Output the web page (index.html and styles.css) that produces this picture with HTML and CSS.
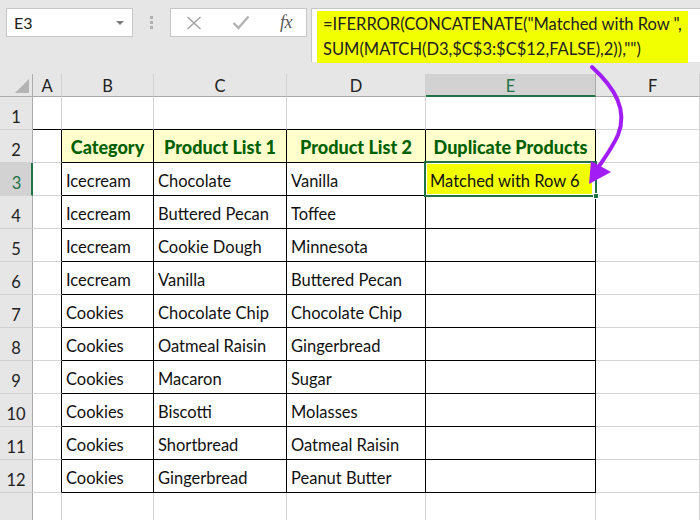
FILE: index.html
```html
<!DOCTYPE html>
<html>
<head>
<meta charset="utf-8">
<link rel="stylesheet" href="styles.css">
</head>
<body>
<div class="app">
  <div class="topbar">
    <div class="namebox"><span class="ref">E3</span><span class="caret"></span></div>
    <div class="grip"><i></i><i></i><i></i></div>
    <div class="fnbox">
      <svg class="ico" width="16" height="14" viewBox="0 0 16 14"><path d="M1.5 1 L14.5 13 M14.5 1 L1.5 13" stroke="#a6a6a6" stroke-width="1.6" fill="none"/></svg>
      <svg class="ico" width="18" height="15" viewBox="0 0 18 15"><path d="M1.5 8 L6.5 13 L16.5 1.5" stroke="#b3b3b3" stroke-width="2.4" fill="none"/></svg>
      <span class="fx">fx</span>
    </div>
    <div class="formulabox">
      <div class="formula">=IFERROR(CONCATENATE("Matched with Row ",<br>SUM(MATCH(D3,$C$3:$C$12,FALSE),2)),"")</div>
    </div>
  </div>
  <div class="sheet">
    <div class="corner"><span class="tri"></span></div>
    <div class="ch">A</div><div class="ch">B</div><div class="ch">C</div><div class="ch">D</div><div class="ch sel">E</div><div class="ch last">F</div>

    <div class="rh">1</div><div class="c tb"></div><div class="c tb"></div><div class="c tb"></div><div class="c tb"></div><div class="c tb"></div><div class="c"></div>

    <div class="rh">2</div><div class="c tl"></div><div class="c t hd">Category</div><div class="c t hd">Product List 1</div><div class="c t hd">Product List 2</div><div class="c t hd">Duplicate Products</div><div class="c"></div>

    <div class="rh sel">3</div><div class="c tl"></div><div class="c t">Icecream</div><div class="c t">Chocolate</div><div class="c t">Vanilla</div><div class="c t active"><div class="selbox"><div class="hl">Matched with Row 6</div></div><span class="handle"></span></div><div class="c"></div>

    <div class="rh">4</div><div class="c tl"></div><div class="c t">Icecream</div><div class="c t">Buttered Pecan</div><div class="c t">Toffee</div><div class="c t"></div><div class="c"></div>

    <div class="rh">5</div><div class="c tl"></div><div class="c t">Icecream</div><div class="c t">Cookie Dough</div><div class="c t">Minnesota</div><div class="c t"></div><div class="c"></div>

    <div class="rh">6</div><div class="c tl"></div><div class="c t">Icecream</div><div class="c t">Vanilla</div><div class="c t">Buttered Pecan</div><div class="c t"></div><div class="c"></div>

    <div class="rh">7</div><div class="c tl"></div><div class="c t">Cookies</div><div class="c t">Chocolate Chip</div><div class="c t">Chocolate Chip</div><div class="c t"></div><div class="c"></div>

    <div class="rh">8</div><div class="c tl"></div><div class="c t">Cookies</div><div class="c t">Oatmeal Raisin</div><div class="c t">Gingerbread</div><div class="c t"></div><div class="c"></div>

    <div class="rh">9</div><div class="c tl"></div><div class="c t">Cookies</div><div class="c t">Macaron</div><div class="c t">Sugar</div><div class="c t"></div><div class="c"></div>

    <div class="rh">10</div><div class="c tl"></div><div class="c t">Cookies</div><div class="c t">Biscotti</div><div class="c t">Molasses</div><div class="c t"></div><div class="c"></div>

    <div class="rh">11</div><div class="c tl"></div><div class="c t">Cookies</div><div class="c t">Shortbread</div><div class="c t">Oatmeal Raisin</div><div class="c t"></div><div class="c"></div>

    <div class="rh">12</div><div class="c tl"></div><div class="c t">Cookies</div><div class="c t">Gingerbread</div><div class="c t">Peanut Butter</div><div class="c t"></div><div class="c"></div>

    <div class="rh"></div><div class="c"></div><div class="c"></div><div class="c"></div><div class="c"></div><div class="c"></div><div class="c"></div>
  </div>
  <svg class="arrow" width="700" height="520" viewBox="0 0 700 520">
    <path d="M592 67 C 615 88, 628 110, 618 135 C 611 150, 603 160, 598 168" stroke="#a21cf5" stroke-width="4" fill="none" stroke-linecap="round"/>
    <path d="M589 184 L591 161 L611 172 Z" fill="#a21cf5"/>
  </svg>
</div>
</body>
</html>
```
FILE: styles.css
```css
* { box-sizing: border-box; }
html, body { margin: 0; padding: 0; }
body {
  width: 700px;
  height: 520px;
  overflow: hidden;
  background: #fff;
  font-family: Lato, "Open Sans", sans-serif;
  color: #000;
}
.app { position: relative; width: 700px; height: 520px; overflow: hidden; }

.topbar {
  height: 74px;
  background: #e6e6e6;
  display: flex;
  align-items: flex-start;
  padding: 8px 0 0 6px;
}
.namebox {
  width: 127px;
  height: 29px;
  background: #fff;
  border: 1px solid #c6c6c6;
  display: flex;
  align-items: center;
  justify-content: space-between;
  padding: 0 8px 0 7px;
}
.ref { font-size: 16px; color: #222; }
.caret {
  width: 0; height: 0;
  border-left: 4px solid transparent;
  border-right: 4px solid transparent;
  border-top: 4px solid #7a7a7a;
}
.grip {
  width: 37px;
  height: 29px;
  display: flex;
  flex-direction: column;
  align-items: center;
  justify-content: center;
  gap: 2px;
}
.grip i { display: block; width: 3px; height: 3px; background: #b0b0b0; }
.fnbox {
  width: 137px;
  height: 29px;
  background: #fff;
  border: 1px solid #c6c6c6;
  display: flex;
  align-items: center;
  padding: 0 14px 0 15px;
  justify-content: space-between;
}
.fx {
  font-family: "Liberation Serif", serif;
  font-style: italic;
  font-size: 18px;
  color: #5a5a5a;
  letter-spacing: -0.5px;
}
.formulabox {
  flex: 1;
  margin-left: 4px;
  height: 54px;
  background: #fff;
  border: 1px solid #c6c6c6;
  border-right: none;
  border-bottom: none;
  padding: 2px 12px 0 5px;
}
.formula {
  background: #f2ff00;
  height: 52px;
  padding: 1px 0 0 6px;
  font-size: 16.5px;
  line-height: 25px;
  color: #222;
  white-space: nowrap;
}

.sheet {
  display: grid;
  grid-template-columns: 33px 29px 92px 133px 139px 170px 1fr;
  grid-template-rows: 23px repeat(13, 33px);
}
.corner {
  background: #e6e6e6;
  border-right: 1px solid #ababab;
  border-bottom: 1px solid #ababab;
  position: relative;
}
.tri {
  position: absolute;
  right: 3px; bottom: 3px;
  width: 0; height: 0;
  border-left: 14px solid transparent;
  border-bottom: 14px solid #b4b4b4;
}
.ch {
  background: #e6e6e6;
  border-right: 1px solid #d0d0d0;
  border-bottom: 1px solid #ababab;
  display: flex;
  align-items: center;
  justify-content: center;
  font-size: 16.5px;
  padding-top: 2px;
  color: #222;
}
.ch.sel {
  background: #d2d2d2;
  border-bottom: 2px solid #217346;
  color: #217346;
  border-right-color: #ababab;
}
.ch.last { justify-content: flex-start; padding-left: 52px; }
.rh {
  background: #e6e6e6;
  border-right: 1px solid #ababab;
  border-bottom: 1px solid #d0d0d0;
  display: flex;
  align-items: center;
  justify-content: center;
  font-size: 16.5px;
  padding-top: 8px;
  color: #222;
}
.rh.sel {
  background: #d2d2d2;
  border-right: 2px solid #217346;
  color: #217346;
  padding-left: 2px;
}
.c {
  border-right: 1px solid #d4d4d4;
  border-bottom: 1px solid #d4d4d4;
  display: flex;
  align-items: center;
  padding: 3px 0 0 4px;
  font-size: 16.5px;
  white-space: nowrap;
  color: #111;
}
.c.tb { border-bottom-color: #000; }
.c.tl { border-right-color: #000; }
.c.t { border-right-color: #000; border-bottom-color: #000; }
.c.hd {
  background: #ffffcc;
  color: #006100;
  font-weight: 900;
  font-size: 18px;
  justify-content: center;
  padding: 1px 0 0 0;
}
.c.active { position: relative; padding: 0; }
.selbox {
  position: absolute;
  left: -2px; top: -2px; right: -2px; bottom: -2px;
  border: 2px solid #217346;
  padding: 1px 3px 1px 1px;
  z-index: 2;
}
.hl {
  background: #f2ff00;
  height: 100%;
  display: flex;
  align-items: center;
  padding: 3px 0 0 3px;
  font-size: 16.5px;
  color: #111;
}
.handle {
  position: absolute;
  right: -4px; bottom: -4px;
  width: 6px; height: 6px;
  background: #217346;
  border: 1px solid #fff;
  z-index: 3;
}
.arrow {
  position: absolute;
  left: 0; top: 0;
  pointer-events: none;
  z-index: 5;
}
```
